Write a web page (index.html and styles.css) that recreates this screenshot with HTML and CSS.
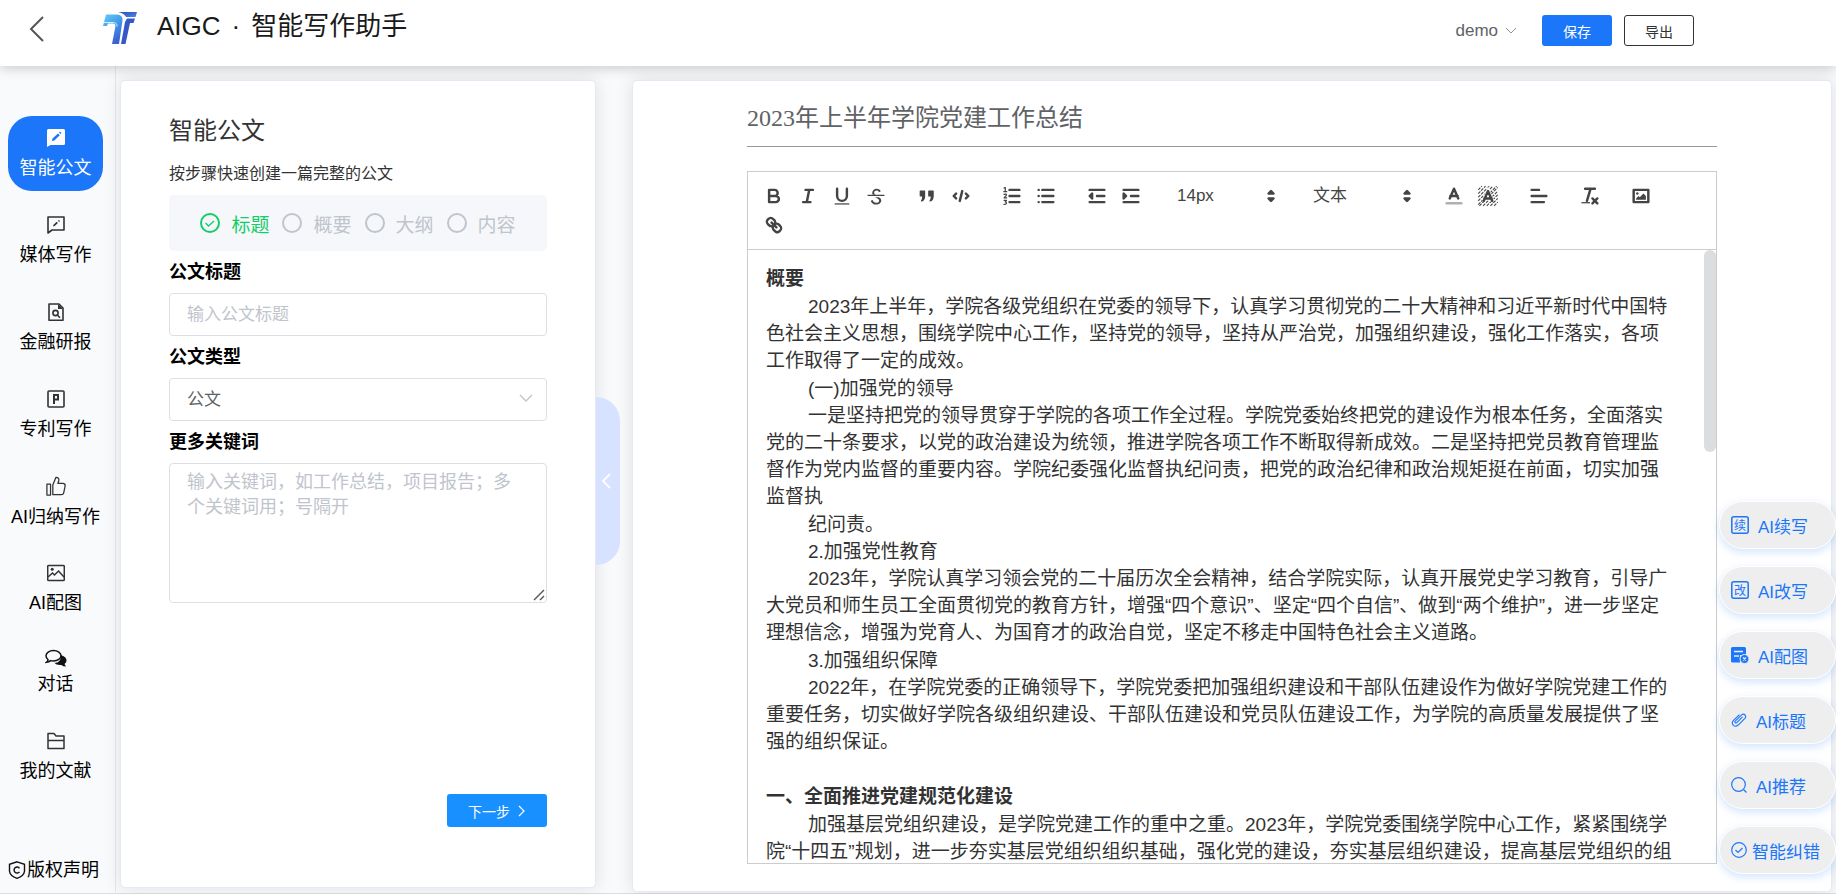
FILE: index.html
```html
<!DOCTYPE html>
<html lang="zh-CN">
<head>
<meta charset="utf-8">
<title>AIGC · 智能写作助手</title>
<link rel="stylesheet" href="styles.css">
</head>
<body>
<div class="app">
  <header class="topbar">
    <button class="back" aria-label="返回"><svg width="16" height="28" viewBox="0 0 16 28"><path d="M14 2 2 14l12 12" fill="none" stroke="#555" stroke-width="2"/></svg></button>
    <svg class="logo" width="36" height="34" viewBox="0 0 36 34">
      <defs>
        <linearGradient id="lg1" x1="0" y1="0" x2="0.500" y2="1"><stop offset="0" stop-color="#62d0f6"/><stop offset="0.600" stop-color="#3f8fe6"/><stop offset="1" stop-color="#3b62d2"/></linearGradient>
        <linearGradient id="lg2" x1="0" y1="0" x2="1" y2="1"><stop offset="0" stop-color="#2c4bb4"/><stop offset="1" stop-color="#4a86e6"/></linearGradient>
      </defs>
      <path d="M4 3.500h11q6 .5 5.500 6L17 33H10l3.500-18q.2-2.500-2-2.500H6L5 15H1z" fill="url(#lg1)"/>
      <path d="M2 11.500h9.500q4 .3 3.500 4" fill="none" stroke="#c9eefc" stroke-width="1"/>
      <path d="M16 1h19l-1.500 5H24q-2-4-8-5z" fill="url(#lg2)"/>
      <path d="M25 7.500h8L31.500 12H28l-4.500 21H19l4-22z" fill="#3558c6"/>
    </svg>
    <h1 class="brand"><span>AIGC</span><span>·</span><span>智能写作助手</span></h1>
    <div class="actions">
      <button class="user">demo <svg width="12" height="8" viewBox="0 0 12 8"><path d="M1 1l5 5 5-5" fill="none" stroke="#909399"/></svg></button>
      <button class="btn btn-save">保存</button>
      <button class="btn btn-export">导出</button>
    </div>
  </header>

  <div class="body">
    <nav class="side">
      <a href="#" class="item active"><svg class="ico" viewBox="0 0 18 18"><path d="M1.500 0h15A1.500 1.500 0 0 1 18 1.500v13a1.500 1.500 0 0 1-1.500 1.500H3.500L0 18V1.500A1.500 1.500 0 0 1 1.500 0z" fill="#fff"/><path d="M5 12l.5-2.500 5.500-5 1.800 1.800-5.500 5.200zM12 3.500l1-1 1.500 1.600-1 1z" fill="#1b76fa"/></svg>智能公文</a>
      <a href="#" class="item"><svg class="ico" viewBox="0 0 18 18"><path d="M1 1h16v13H5l-4 3z" fill="none" stroke="#333" stroke-width="1.600" stroke-linejoin="round"/><path d="M6 10.500l.5-1.800 3.200-3 1.200 1.200-3.200 3zM11 4.800l.8-.8 1.200 1.100-.9.800z" fill="#333"/></svg>媒体写作</a>
      <a href="#" class="item"><svg class="ico" viewBox="0 0 18 18"><path d="M2 1h10l4 4v12.200H2z" fill="none" stroke="#333" stroke-width="1.600" stroke-linejoin="round"/><path d="M11 1v5h5z" fill="#333"/><circle cx="8.500" cy="10" r="2.600" fill="none" stroke="#333" stroke-width="1.600"/><path d="M10.300 12l2.700 2.700" stroke="#333" stroke-width="1.600"/></svg>金融研报</a>
      <a href="#" class="item"><svg class="ico" viewBox="0 0 18 18"><rect x="1" y="1" width="16" height="16" rx="1" fill="none" stroke="#333" stroke-width="1.600"/><path d="M7 14V5h4v4.500H7" fill="none" stroke="#333" stroke-width="2"/></svg>专利写作</a>
      <a href="#" class="item"><svg class="ico wide" viewBox="0 0 22 22"><path d="M1 9h4v12H1zM7.500 20.500V10L11 1.500c3 0 3.500 2 3 4L13 8h6q2.500.5 2 3l-1.500 7.500q-.5 2-2.500 2z" fill="none" stroke="#333" stroke-width="1.400" stroke-linejoin="round"/></svg>AI归纳写作</a>
      <a href="#" class="item"><svg class="ico" viewBox="0 0 18 18"><rect x="0.700" y="1.500" width="16.600" height="15" rx="1" fill="none" stroke="#333" stroke-width="1.500"/><circle cx="5.200" cy="5.300" r="1.500" fill="#333"/><path d="M1 13l4.500-4 2 2 4-4 5.500 6" fill="none" stroke="#333" stroke-width="1.500"/></svg>AI配图</a>
      <a href="#" class="item short"><svg class="ico wide" viewBox="0 0 22 18"><path d="M16 6q6 2 5.500 6-.5 2-2 3l1.500 2.500q-3 0-4.500-1.500-5 .5-7-2 6.500 0 6.500-8z" fill="#111"/><path d="M8.500 1.500c4.200 0 7.500 2.300 7.500 5.200S12.700 12 8.500 12q-1.500 0-3-.4Q4 13 1.500 13.300 3 12 3 10.500 1 9 1 6.700C1 3.800 4.300 1.500 8.500 1.500z" fill="#f8fafc" stroke="#111" stroke-width="1.500"/></svg>对话</a>
      <a href="#" class="item"><svg class="ico" viewBox="0 0 18 18"><path d="M1 16.500V1.500h6l2 2.500h8v12.500zM1 8.500h16" fill="none" stroke="#333" stroke-width="1.500" stroke-linejoin="round"/></svg>我的文献</a>
      <a href="#" class="rights"><svg width="18" height="18" viewBox="0 0 18 18"><path d="M9 .8l7.500 2.500v7Q16 15 9 17.300 2 15 1.500 10.300v-7z" fill="none" stroke="#111" stroke-width="1.400"/><path d="M11.500 7.300a3 3 0 1 0 0 3.500" fill="none" stroke="#111" stroke-width="1.400"/></svg>版权声明</a>
    </nav>

    <section class="card form-card">
      <form class="form">
        <h2 class="form-title">智能公文</h2>
        <p class="form-sub">按步骤快速创建一篇完整的公文</p>
        <ol class="steps">
          <li class="step done"><svg width="20" height="20" viewBox="0 0 20 20"><circle cx="10" cy="10" r="9" fill="none" stroke="currentColor" stroke-width="2"/><path d="M5.500 10l3 3 5.500-5" fill="none" stroke="currentColor" stroke-width="1.300"/></svg>标题</li>
          <li class="step"><svg width="20" height="20" viewBox="0 0 20 20"><circle cx="10" cy="10" r="9" fill="none" stroke="currentColor" stroke-width="2"/></svg>概要</li>
          <li class="step"><svg width="20" height="20" viewBox="0 0 20 20"><circle cx="10" cy="10" r="9" fill="none" stroke="currentColor" stroke-width="2"/></svg>大纲</li>
          <li class="step"><svg width="20" height="20" viewBox="0 0 20 20"><circle cx="10" cy="10" r="9" fill="none" stroke="currentColor" stroke-width="2"/></svg>内容</li>
        </ol>
        <label class="label" for="t">公文标题</label>
        <input class="field" id="t" type="text" placeholder="输入公文标题">
        <label class="label" for="k">公文类型</label>
        <div class="select-wrap">
          <select class="field" id="k"><option>公文</option></select>
          <svg class="caret" width="14" height="9" viewBox="0 0 14 9"><path d="M1 1l6 6 6-6" fill="none" stroke="#c0c4cc" stroke-width="1.400"/></svg>
        </div>
        <label class="label" for="w">更多关键词</label>
        <div class="area-wrap">
          <textarea class="field area" id="w" placeholder="输入关键词，如工作总结，项目报告；多个关键词用；号隔开"></textarea>
          <svg class="grip" width="12" height="12" viewBox="0 0 12 12"><path d="M1 11L11 1M7 11l4-4" stroke="#555" stroke-width="1.400"/></svg>
        </div>
        <button class="next" type="button">下一步 <svg width="8" height="12" viewBox="0 0 8 12"><path d="M1 1l5 5-5 5" fill="none" stroke="#fff" stroke-width="1.200"/></svg></button>
      </form>
    </section>

    <button class="fold" aria-label="收起"><svg width="10" height="16" viewBox="0 0 10 16"><path d="M9 1L2 8l7 7" fill="none" stroke="#fff" stroke-width="1.800"/></svg></button>

    <main class="card doc-card">
      <input class="doc-title" aria-label="文档标题" value="2023年上半年学院党建工作总结">
      <div class="editor">
        <div class="toolbar">
          <div class="group">
            <button class="tool" aria-label="加粗"><svg viewBox="0 0 18 18"><path class="st" d="M5 4h4.500a2.500 2.500 0 0 1 0 5H5zM5 9h5.500a2.500 2.500 0 0 1 0 5H5z"/></svg></button>
            <button class="tool" aria-label="斜体"><svg viewBox="0 0 18 18"><path class="st" d="M7 4h6M5 14h6M8 14l2-10"/></svg></button>
            <button class="tool" aria-label="下划线"><svg viewBox="0 0 18 18"><path class="st" d="M5 3v6a4 4 0 0 0 8 0V3"/><rect class="fl" x="3" y="15" width="12" height="1"/></svg></button>
            <button class="tool" aria-label="删除线"><svg viewBox="0 0 18 18"><path class="st thin" d="M2.500 8.500h13"/><path class="fl" d="M6.500 8C6 7.500 5.900 7 5.900 6.500 6 4.500 7.500 3 9.500 3c1.700 0 3 .8 3.400 2.200l-1.500.8C11.200 5 10.500 4.600 9.500 4.600 8 4.600 7.500 5.500 7.500 6.300c0 .6.300 1.200 1.200 1.700zM11 10c1.500.6 2.300 1.400 2.300 2.700 0 1.900-1.800 3.300-4 3.300S5 14.700 4.700 12.800l1.600-.5c.3 1.500 1.400 2.200 3 2.200 1.400 0 2.300-.7 2.300-1.700 0-.9-.6-1.500-2.100-2.200L8 10z"/></svg></button>
          </div>
          <div class="group">
            <button class="tool" aria-label="引用"><svg viewBox="0 0 18 18"><path class="fl joined slim" d="M3.500 5h3.500v4q0 3.500-2.500 4 1.200-1.500 1-4h-2zM10.500 5H14v4q0 3.500-2.500 4 1.200-1.500 1-4h-2z"/></svg></button>
            <button class="tool" aria-label="代码"><svg viewBox="0 0 18 18"><path class="st" d="M5 7L3 9l2 2M13 7l2 2-2 2M10 5l-2 8"/></svg></button>
          </div>
          <div class="group">
            <button class="tool" aria-label="有序列表"><svg viewBox="0 0 18 18"><path class="st" d="M7 4h8M7 9h8M7 14h8"/><path class="st thin" d="M2.500 2.500l1-.5v3.500M2.300 5.500h2.400M2.500 7.700q2-.8 2 .6L2.500 10.500h2.200M2.500 12.500h2l-1 1.300q1.800.8.300 1.900l-1.400.1"/></svg></button>
            <button class="tool" aria-label="无序列表"><svg viewBox="0 0 18 18"><path class="st" d="M6 4h9M6 9h9M6 14h9M3 4v0M3 9v0M3 14v0"/></svg></button>
          </div>
          <div class="group">
            <button class="tool" aria-label="减少缩进"><svg viewBox="0 0 18 18"><path class="st" d="M3 14h12M3 4h12M9 9h6"/><path class="fl joined" d="M5 7v4L3 9z"/></svg></button>
            <button class="tool" aria-label="增加缩进"><svg viewBox="0 0 18 18"><path class="st" d="M3 14h12M3 4h12M9 9h6"/><path class="fl joined" d="M3 7v4l2-2z"/></svg></button>
          </div>
          <div class="pick"><select aria-label="字号"><option>14px</option></select><svg viewBox="0 0 18 18"><path class="fl joined" d="M7 7l2-2 2 2zM7 11l2 2 2-2z"/></svg></div>
          <div class="pick"><select aria-label="段落"><option>文本</option></select><svg viewBox="0 0 18 18"><path class="fl joined" d="M7 7l2-2 2 2zM7 11l2 2 2-2z"/></svg></div>
          <div class="group">
            <button class="tool" aria-label="文字颜色"><svg viewBox="0 0 18 18"><path d="M3 15h12" stroke="#b0b0b0" stroke-width="2" stroke-linecap="round"/><path class="st" d="M5.500 11L9 3l3.500 8M12 9H6"/></svg></button>
            <button class="tool" aria-label="背景颜色"><svg viewBox="0 0 18 18"><path d="M1 4l3-3M1 7l6-6M1 10l9-9M1 13L13 1M1 16L16 1M2 17L17 2M5 17L17 5M8 17l9-9M11 17l6-6M14 17l3-3" stroke="#444" stroke-width=".9" stroke-dasharray="2.500 .9"/><path d="M5.500 13L9 5l3.500 8M11.500 11h-5" fill="none" stroke="#fff" stroke-width="3.200"/><path class="st" d="M5.500 13L9 5l3.500 8M12 11H6"/></svg></button>
          </div>
          <div class="group"><button class="tool" aria-label="对齐"><svg viewBox="0 0 18 18"><path class="st" d="M3 9h12M3 14h10M3 4h6"/></svg></button></div>
          <div class="group"><button class="tool" aria-label="清除格式"><svg viewBox="0 0 18 18"><path class="st" d="M5 3h8M6.500 13L9.500 3M11 11l4 4M15 11l-4 4"/><rect class="fl" x="2" y="14" width="7" height="1"/></svg></button></div>
          <div class="group"><button class="tool" aria-label="图片"><svg viewBox="0 0 18 18"><rect class="st" x="3" y="4" width="12" height="10"/><circle class="fl" cx="6" cy="7" r="1"/><path class="fl" d="M5 12v-1l2-2 1 1 3-3 2 2v3z"/></svg></button></div>
          <div class="group"><button class="tool" aria-label="链接"><svg viewBox="0 0 18 18"><path class="st" d="M7 7l4 4M8.900 4.577a3.476 3.476 0 0 1 .36 4.679A3.476 3.476 0 0 1 4.577 8.900C3.185 7.500 2.035 6.400 4.217 4.217S7.500 3.185 8.900 4.577zM13.423 9.100a3.476 3.476 0 0 0-4.679-.36 3.476 3.476 0 0 0 .36 4.679c1.392 1.392 2.500 2.542 4.679.36s1.031-3.287-.36-4.679z"/></svg></button></div>
        </div>
        <div class="page">
          <article class="text" contenteditable="true" spellcheck="false">
            <h3>概要</h3>
            <p class="long">2023年上半年，学院各级党组织在党委的领导下，认真学习贯彻党的二十大精神和习近平新时代中国特色社会主义思想，围绕学院中心工作，坚持党的领导，坚持从严治党，加强组织建设，强化工作落实，各项工作取得了一定的成效。</p>
            <p>(一)加强党的领导</p>
            <p class="long">一是坚持把党的领导贯穿于学院的各项工作全过程。学院党委始终把党的建设作为根本任务，全面落实党的二十条要求，以党的政治建设为统领，推进学院各项工作不断取得新成效。二是坚持把党员教育管理监督作为党内监督的重要内容。学院纪委强化监督执纪问责，把党的政治纪律和政治规矩挺在前面，切实加强监督执</p>
            <p>纪问责。</p>
            <p>2.加强党性教育</p>
            <p class="long">2023年，学院认真学习领会党的二十届历次全会精神，结合学院实际，认真开展党史学习教育，引导广大党员和师生员工全面贯彻党的教育方针，增强“四个意识”、坚定“四个自信”、做到“两个维护”，进一步坚定理想信念，增强为党育人、为国育才的政治自觉，坚定不移走中国特色社会主义道路。</p>
            <p>3.加强组织保障</p>
            <p class="long">2022年，在学院党委的正确领导下，学院党委把加强组织建设和干部队伍建设作为做好学院党建工作的重要任务，切实做好学院各级组织建设、干部队伍建设和党员队伍建设工作，为学院的高质量发展提供了坚强的组织保证。</p>
            <p><br></p>
            <h3>一、全面推进党建规范化建设</h3>
            <p class="long">加强基层党组织建设，是学院党建工作的重中之重。2023年，学院党委围绕学院中心工作，紧紧围绕学院“十四五”规划，进一步夯实基层党组织组织基础，强化党的建设，夯实基层组织建设，提高基层党组织的组</p>
          </article>
          <div class="thumb"></div>
        </div>
      </div>
    </main>
  </div>

  <div class="floats">
    <button class="pill"><svg width="18" height="18" viewBox="0 0 18 18"><rect x="0.800" y="0.800" width="16.400" height="16.400" rx="2" fill="none" stroke="#1b76fa" stroke-width="1.500"/><text x="9" y="13.500" text-anchor="middle" font-size="12" fill="#1b76fa">续</text></svg><span>AI续写</span></button>
    <button class="pill"><svg width="18" height="18" viewBox="0 0 18 18"><rect x="0.800" y="0.800" width="16.400" height="16.400" rx="2" fill="none" stroke="#1b76fa" stroke-width="1.500"/><text x="9" y="13.500" text-anchor="middle" font-size="12" fill="#1b76fa">改</text></svg><span>AI改写</span></button>
    <button class="pill"><svg width="18" height="18" viewBox="0 0 18 18"><path d="M1.500 1h12A1.500 1.500 0 0 1 15 2.500V9H9v7.500H1.500A1.500 1.500 0 0 1 0 15V2.500A1.500 1.500 0 0 1 1.500 1z" fill="#1b76fa"/><path d="M3 5.500h9M3 10h5" stroke="#eee" stroke-width="1.400"/><circle cx="13.500" cy="13" r="4.500" fill="#1b76fa" stroke="#eee"/><path d="M12 11.500l3 3M15 11.500l-3 3" stroke="#eee" stroke-width="1.200"/></svg><span>AI配图</span></button>
    <button class="pill"><svg width="16" height="16" viewBox="0 0 18 18"><path d="M13 5.500L6.500 12q-1.500 1-2-.5-.3-.8.500-1.500l7-6.800q2-1.500 3.800.2 1.500 2-.2 3.800l-7.500 7.500q-3 2.500-5.500.3-2.300-2.600.2-5.500L9.500 3" fill="none" stroke="#1b76fa" stroke-width="1.300"/></svg><span>AI标题</span></button>
    <button class="pill"><svg width="16" height="16" viewBox="0 0 16 16"><circle cx="7.500" cy="7.500" r="6.800" fill="none" stroke="#1b76fa" stroke-width="1.200"/><path d="M12.500 12.500l3 3" stroke="#1b76fa" stroke-width="1.200"/></svg><span>AI推荐</span></button>
    <button class="pill tight"><svg width="16" height="16" viewBox="0 0 16 16"><circle cx="8" cy="8" r="7.300" fill="none" stroke="#1b76fa" stroke-width="1.200"/><path d="M4.500 8l2.500 2.500 4.500-4.500" fill="none" stroke="#1b76fa" stroke-width="1.200"/></svg><span>智能纠错</span></button>
  </div>
</div>
</body>
</html>
```
FILE: styles.css
```css
* { box-sizing: border-box; }
body {
  margin: 0;
  font-family: "Liberation Sans", "Noto Sans CJK SC", sans-serif;
  color: #333;
}
button, input, select, textarea { font-family: inherit; margin: 0; }
button { cursor: pointer; padding: 0; border: 0; background: none; }
svg { display: block; flex: none; }
h1, h2, h3, p, ol { margin: 0; padding: 0; }

.app { position: relative; height: 100vh; display: flex; flex-direction: column; background: #f8fafc; overflow: hidden; }

.topbar {
  position: relative;
  z-index: 2;
  flex: none;
  display: flex;
  align-items: center;
  height: 66px;
  padding: 0 142px 0 29px;
  background: #fff;
  box-shadow: 0 2px 12px rgba(0, 0, 0, .2);
}
.back { margin-top: -8px; }
.logo { margin: -11px 0 0 57px; }
.brand {
  display: flex;
  gap: 11px;
  margin: -14px 0 0 19px;
  font-size: 26px;
  line-height: 36px;
  font-weight: 400;
  color: #1a1a1a;
}
.actions { display: flex; align-items: center; margin: -5px 0 0 auto; }
.user { display: flex; align-items: center; gap: 7px; margin-right: 25px; font-size: 17px; color: #606266; }
.btn { width: 70px; height: 31px; border-radius: 3px; font-size: 14px; }
.btn-save { background: #1b76fa; color: #fff; }
.btn-export { margin-left: 12px; border: 1px solid #333; background: #fff; color: #333; }

.body { flex: 1; min-height: 0; display: flex; border-bottom: 1px solid #dcdde0; padding-bottom: 1px; }

.side {
  flex: none;
  width: 116px;
  display: flex;
  flex-direction: column;
  gap: 12px;
  padding: 50px 12px 8px 8px;
  border-right: 1px solid #e4e6ea;
}
.side a { color: #000; text-decoration: none; font-size: 18px; }
.item {
  display: flex;
  flex-direction: column;
  align-items: center;
  justify-content: center;
  gap: 8px;
  height: 75px;
  padding-top: 2px;
  line-height: 26px;
  border-radius: 24px;
  white-space: nowrap;
}
.side .active { background: #1b76fa; color: #fff; }
.item.short { height: 69px; gap: 3px; padding: 0; }
.ico { width: 18px; height: 18px; }
.ico.wide { width: 22px; height: 20px; }
.rights { display: flex; align-items: center; gap: 1px; margin-top: auto; line-height: 28px; white-space: nowrap; }

.card {
  background: #fff;
  border: 1px solid #e4e9f5;
  border-radius: 5px;
  box-shadow: 0 0 18px rgba(0, 0, 0, .11);
}
.form-card { flex: 0 1 476px; margin: 14px 0 4px 4px; padding: 31px 48px 0 48px; }
.form { display: flex; flex-direction: column; }
.form-title { font-size: 24px; line-height: 38px; font-weight: 400; }
.form-sub { margin-top: 12px; font-size: 16px; line-height: 24px; }
.steps {
  display: flex;
  justify-content: center;
  gap: 13px;
  height: 56px;
  margin-top: 9px;
  border-radius: 5px;
  background: #f5f7fb;
  list-style: none;
}
.step { display: flex; align-items: center; gap: 11px; font-size: 19px; color: #c0c4cc; }
.step.done { color: #13ce66; }
.label { margin: 8px 0; font-size: 18px; line-height: 26px; font-weight: 700; color: #000; }
.field {
  display: block;
  width: 100%;
  height: 43px;
  padding: 0 17px;
  border: 1px solid #dcdfe6;
  border-radius: 4px;
  background: #fff;
  color: #606266;
  font-size: 17px;
  appearance: none;
}
.field::placeholder { color: #c0c4cc; }
.select-wrap, .area-wrap { position: relative; }
.caret { position: absolute; right: 14px; top: 16px; pointer-events: none; }
.area { height: 140px; padding: 6px 34px 5px 17px; font-size: 18px; line-height: 25px; resize: none; }
.grip { position: absolute; right: 2px; bottom: 2px; pointer-events: none; }
.next {
  align-self: flex-end;
  display: flex;
  align-items: center;
  justify-content: center;
  gap: 8px;
  width: 100px;
  height: 33px;
  margin-top: 191px;
  border-radius: 3px;
  background: #1890ff;
  color: #fff;
  font-size: 14px;
}

.fold {
  position: relative;
  flex: none;
  align-self: center;
  width: 24px;
  height: 168px;
  margin-top: 4px;
  padding-left: 5px;
  border-radius: 0 24px 24px 0;
  background: #d6e2ff;
}

.doc-card { flex: 1; min-width: 0; display: flex; flex-direction: column; margin: 14px 4px 0 12px; padding: 16px 114px 27px 114px; }
.doc-title {
  width: 100%;
  height: 50px;
  padding: 0 0 12px;
  border: 0;
  border-bottom: 1px solid #999;
  background: none;
  font: 24px "Liberation Serif", "Noto Sans CJK SC", serif;
  color: #606266;
}
.editor { flex: 1; min-height: 0; display: flex; flex-direction: column; margin-top: 24px; border: 1px solid #ccc; }
.toolbar { display: flex; flex-wrap: wrap; column-gap: 17px; padding: 9px 9px 10px; border-bottom: 1px solid #ccc; }
.group { display: flex; }
.tool { display: grid; place-items: center; width: 34px; height: 29px; }
.tool svg { width: 22px; height: 22px; }
.st { fill: none; stroke: #444; stroke-width: 2; stroke-linecap: round; stroke-linejoin: round; }
.st.thin { stroke-width: 1; }
.fl { fill: #444; }
.fl.joined { stroke: #444; stroke-width: 2; stroke-linejoin: round; }
.fl.slim { stroke-width: 1; }
.pick { position: relative; width: 119px; height: 29px; }
.pick select { width: 100%; height: 100%; padding: 0 12px; border: 0; background: none; appearance: none; font-size: 17px; color: #444; }
.pick svg { position: absolute; right: 2px; top: 4px; width: 22px; height: 22px; pointer-events: none; }

.page { position: relative; flex: 1; min-height: 0; overflow: hidden; }
.text { padding: 15px 41px 0 18px; font-size: 19px; line-height: 27px; outline: 0; }
.text h3 { margin-bottom: 1px; font-size: 19px; font-weight: 700; }
.text p { text-indent: 42px; }
.text .long { margin-bottom: 1px; }
.thumb { position: absolute; top: 0; right: 0; width: 12px; height: 202px; border-radius: 6px; background: #dcdddf; }

.floats { position: absolute; z-index: 3; right: 0; bottom: 20px; display: flex; flex-direction: column; gap: 17px; }
.pill {
  display: flex;
  align-items: center;
  gap: 9px;
  width: 117px;
  height: 48px;
  padding-left: 11px;
  border: 1px solid #fff;
  border-radius: 24px;
  background: #eee;
  box-shadow: 0 3px 8px rgba(27, 118, 250, .2);
  color: #1b76fa;
  font-size: 17px;
  white-space: nowrap;
}
.pill.tight { gap: 5px; }
```
